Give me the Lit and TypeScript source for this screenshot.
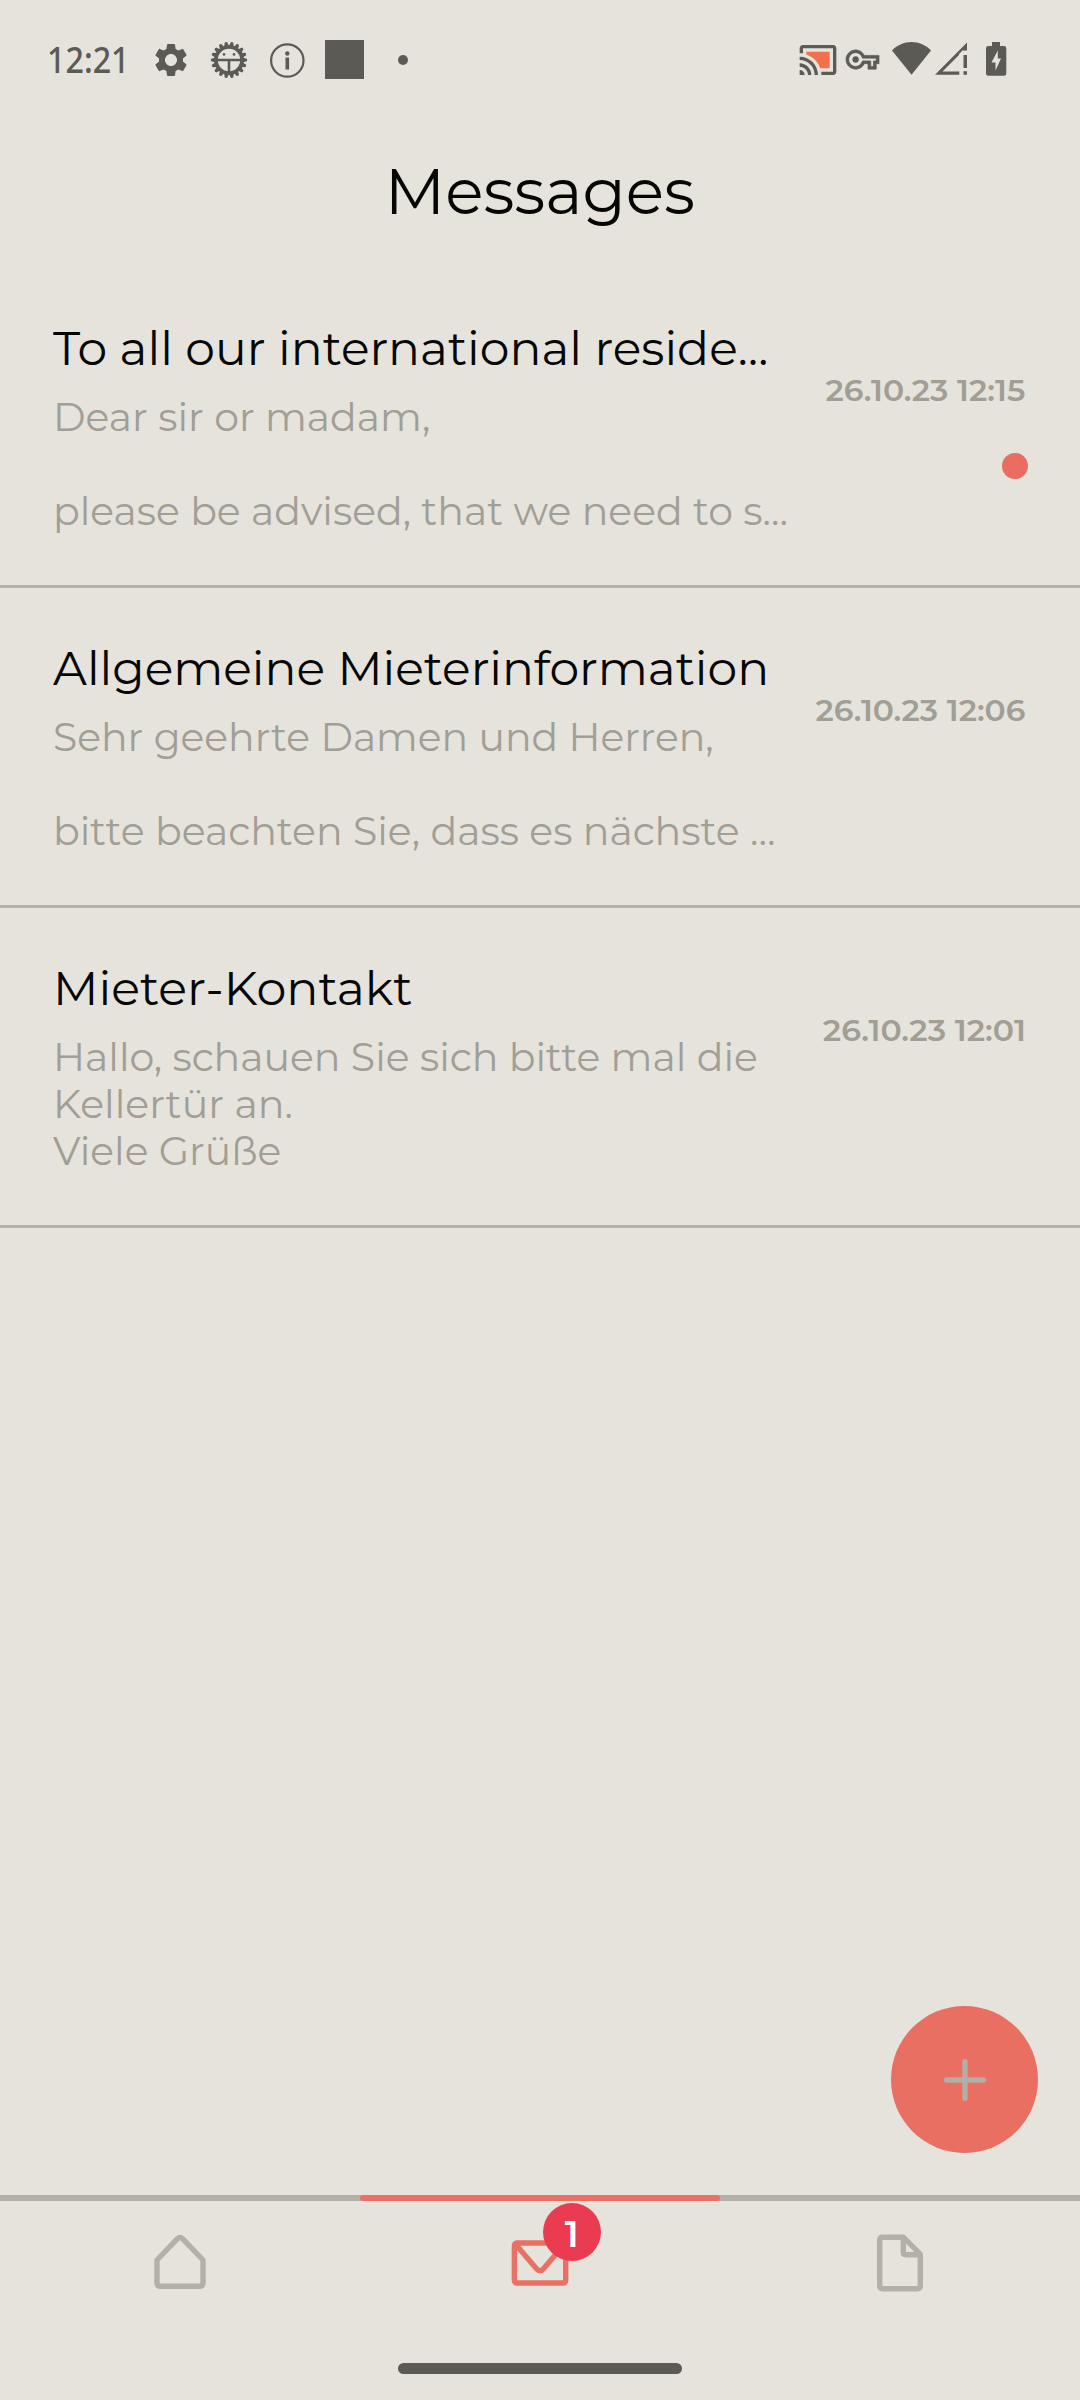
import { LitElement, html, css, svg, nothing } from "lit";
import { customElement, property, state } from "lit/decorators.js";

/** A single line of text whose drawn width is scaled to a given measure. */
@customElement("fit-text")
export class FitText extends LitElement {
  static styles = css`
    :host { display: block; white-space: pre; }
    .line { display: inline-block; transform-origin: var(--fit-origin, left) center; }
  `;
  @property() text = "";
  @property({ type: Number }) measure = 0;
  @state() private ratio = 1;

  firstUpdated() {
    const cs = getComputedStyle(this);
    const ctx = document.createElement("canvas").getContext("2d")!;
    ctx.font = `${cs.fontWeight} ${cs.fontSize} ${cs.fontFamily}`;
    const m = ctx.measureText(this.text);
    const drawn = m.actualBoundingBoxRight + m.actualBoundingBoxLeft;
    if (drawn > 0 && this.measure > 0) this.ratio = this.measure / drawn;
  }
  render() {
    return html`<span class="line" style="transform: scaleX(${this.ratio})">${this.text}</span>`;
  }
}

type Line = [text: string, measure: number];
interface Message {
  title: Line;
  preview: Line[];
  date: Line;
  unread: boolean;
}

const MESSAGES: Message[] = [
  {
    title: ["To all our international reside…", 713],
    preview: [["Dear sir or madam,", 372], ["", 0], ["please be advised, that we need to s…", 730]],
    date: ["26.10.23 12:15", 199],
    unread: true,
  },
  {
    title: ["Allgemeine Mieterinformation", 712.5],
    preview: [["Sehr geehrte Damen und Herren,", 658.5], ["", 0], ["bitte beachten Sie, dass es nächste …", 717.5]],
    date: ["26.10.23 12:06", 210],
    unread: false,
  },
  {
    title: ["Mieter-Kontakt", 353.5],
    preview: [["Hallo, schauen Sie sich bitte mal die", 699.5], ["Kellertür an.", 234.5], ["Viele Grüße", 227]],
    date: ["26.10.23 12:01", 200.5],
    unread: false,
  },
];

@customElement("message-row")
export class MessageRow extends LitElement {
  static styles = css`
    :host { display: block; }
    .row {
      box-sizing: border-box; height: 320px; padding: 54px 54.5px 0 52.5px;
      display: flex; justify-content: space-between;
      border-bottom: 3px solid #b4b1a8;
    }
    .title { font-size: 46.75px; line-height: 54px; font-weight: 400; color: #060604; margin-bottom: 18px; }
    .preview { font-size: 38.5px; line-height: 47px; height: 47px; font-weight: 400; color: #a19e95; }
    .meta { padding-top: 51px; display: flex; flex-direction: column; align-items: flex-end; gap: 44px; }
    .date { font-size: 30.25px; line-height: 36px; font-weight: 600; color: #a19e95; --fit-origin: right; }
    .dot { width: 26px; height: 26px; border-radius: 50%; background: #e96d60; margin-right: -2px; }
  `;
  @property({ attribute: false }) message!: Message;
  render() {
    const { title, preview, date, unread } = this.message;
    return html`<article class="row">
      <div>
        <fit-text class="title" .text=${title[0]} .measure=${title[1]}></fit-text>
        ${preview.map(([t, w]) => html`<fit-text class="preview" .text=${t} .measure=${w}></fit-text>`)}
      </div>
      <div class="meta">
        <fit-text class="date" .text=${date[0]} .measure=${date[1]}></fit-text>
        ${unread ? html`<span class="dot"></span>` : nothing}
      </div>
    </article>`;
  }
}

@customElement("status-bar")
export class StatusBar extends LitElement {
  static styles = css`
    :host { display: block; color: #5c5a55; }
    .bar { display: flex; align-items: center; justify-content: space-between; height: 119px; box-sizing: border-box; padding: 0 73.7px 0 47px; }
    .group { display: flex; align-items: center; }
    .left { gap: 18px; }
    .clock { width: 86px; font-family: "Noto Sans", "Open Sans", sans-serif; font-size: 35.5px; line-height: 42px; font-weight: 500; margin-bottom: 2px; }
    .square { width: 39px; height: 39px; background: currentColor; }
    .more { width: 10px; height: 10px; border-radius: 50%; background: currentColor; margin-left: 16px; }
    svg { display: block; fill: currentColor; flex: none; overflow: visible; }
    .key { margin-left: 8.4px; }
    .wifi { margin-left: 13px; }
    .signal { margin-left: 4px; }
    .battery { margin-left: 19px; }
    .hot { fill: #f2714c; }
    .line { fill: none; stroke: currentColor; }
  `;
  render() {
    const teeth = Array.from({ length: 18 }, (_, i) => svg`<path d="M17.400 7 18.700 2.200Q20 1.400 21.300 2.200L22.600 7z" transform="rotate(${i * 20 + 10} 20 20)"/>`);
    return html`<div class="bar">
      <div class="group left">
        <fit-text class="clock" .text=${"12:21"} .measure=${75}></fit-text>
        <svg width="40" height="40" viewBox="0 0 24 24"><path d="M19.14 12.94c.04-.3.06-.61.06-.94 0-.32-.02-.64-.07-.94l2.03-1.58a.49.49 0 0 0 .12-.61l-1.92-3.32a.488.488 0 0 0-.59-.22l-2.39.96c-.5-.38-1.03-.7-1.62-.94l-.36-2.54a.484.484 0 0 0-.48-.41h-3.84c-.24 0-.43.17-.47.41l-.36 2.54c-.59.24-1.13.57-1.62.94l-2.39-.96c-.22-.08-.47 0-.59.22L2.74 8.87c-.12.21-.08.47.12.61l2.03 1.58c-.05.3-.09.63-.09.94s.02.64.07.94l-2.03 1.58a.49.49 0 0 0-.12.61l1.92 3.32c.12.22.37.29.59.22l2.39-.96c.5.38 1.03.7 1.62.94l.36 2.54c.05.24.24.41.48.41h3.84c.24 0 .44-.17.47-.41l.36-2.54c.59-.24 1.13-.56 1.62-.94l2.39.96c.22.08.47 0 .59-.22l1.92-3.32c.12-.22.07-.47-.12-.61l-2.01-1.58zM12 15.6c-1.98 0-3.6-1.62-3.6-3.6s1.62-3.6 3.6-3.6 3.6 1.62 3.6 3.6-1.62 3.6-3.6 3.6z"/></svg>
        <svg width="40" height="40" viewBox="0 0 40 40">
          ${teeth}
          <circle class="line" cx="20" cy="20" r="13" stroke-width="3.6"/>
          <path class="line" stroke-width="2.6" d="M7 20h26M20 20v13"/>
          <circle cx="15" cy="14.4" r="1.3"/><circle cx="25" cy="14.4" r="1.3"/>
        </svg>
        <svg width="40" height="40" viewBox="0 0 40 40">
          <circle class="line" cx="20.3" cy="20.5" r="16.2" stroke-width="2.2"/>
          <circle cx="20.3" cy="13.5" r="2.2"/><path d="M18.500 17.500h3.600v12h-3.600z"/>
        </svg>
        <span class="square"></span>
        <span class="more"></span>
      </div>
      <div class="group">
        <svg width="40" height="40" viewBox="0 0 24 24">
          <path class="hot" d="M19 7H5v1.63c3.96 1.28 7.09 4.41 8.37 8.37H19z"/>
          <path d="M1 18v3h3c0-1.66-1.34-3-3-3zm0-4v2c2.76 0 5 2.24 5 5h2c0-3.87-3.13-7-7-7zm0-4v2c4.97 0 9 4.03 9 9h2c0-6.08-4.93-11-11-11zm20-7H3c-1.1 0-2 .9-2 2v3h2V5h18v14h-7v2h7c1.1 0 2-.9 2-2V5c0-1.1-.9-2-2-2z"/>
        </svg>
        <svg class="key" width="33" height="33" viewBox="0 0 24 24"><path stroke="currentColor" stroke-width=".5" d="M22 19h-6v-4h-2.68c-1.14 2.42-3.6 4-6.32 4-3.86 0-7-3.14-7-7s3.14-7 7-7c2.72 0 5.17 1.58 6.32 4H24v6h-2v4zm-4-2h2v-4h2v-2H11.94l-.23-.67C11.01 8.34 9.11 7 7 7c-2.76 0-5 2.24-5 5s2.24 5 5 5c2.11 0 4.01-1.34 4.71-3.33l.23-.67H18v4z"/><circle cx="7" cy="12" r="2.3"/></svg>
        <svg class="wifi" width="39" height="40" viewBox="0 0 39 40"><path d="M19.5 34.7 0 10.5C5.2 5 12 2 19.5 2S33.800 5 39 10.500z"/></svg>
        <svg class="signal" width="32" height="40" viewBox="0 0 32 40"><path d="M0 34.700 32 2.500V10.500H27.500L24 14V15L7.500 31.500H24.300V34.700zM28.500 15H32V28H28.500zM28.500 31.300H32V34.700H28.500z"/></svg>
        <svg class="battery" width="20.300" height="40" viewBox="0 0 20.300 40"><path fill-rule="evenodd" d="M6 2h8v4h4a2.300 2.300 0 0 1 2.300 2.300V33.500a2.300 2.300 0 0 1-2.300 2.300H2.300A2.300 2.300 0 0 1 0 33.500V8.300A2.300 2.300 0 0 1 2.300 6H6zM11.800 10.500 5.500 22.500H9.500V30.500L15 18.500H11.800z"/></svg>
      </div>
    </div>`;
  }
}

@customElement("tab-bar")
export class TabBar extends LitElement {
  static styles = css`
    :host { display: block; }
    .tabs { display: grid; grid-template-columns: repeat(3, 1fr); background: linear-gradient(#b3b0a7, #b3b0a7) 0 0 / 100% 6px no-repeat; }
    .tab { display: flex; flex-direction: column; align-items: center; color: #b3b0a7; }
    .mark { width: 100%; height: 6px; border-radius: 3px; margin-bottom: 31px; }
    .active { color: #e97063; }
    .active .mark { background: currentColor; }
    .icon { position: relative; width: 64px; height: 64px; }
    svg { display: block; fill: none; stroke: currentColor; stroke-width: 5.400; stroke-linejoin: round; stroke-linecap: round; }
    .badge {
      position: absolute; left: 34.700px; top: -29.500px; width: 58px; height: 58px; border-radius: 50%;
      background: #eb3b50; color: #fff; font-size: 37px; line-height: 61px; font-weight: 600; text-align: center;
    }
    .gesture { width: 284px; height: 11px; border-radius: 6px; background: #5c5a55; margin: 66.500px auto 0; }
  `;
  render() {
    return html`<nav class="tabs">
        <div class="tab"><span class="mark"></span><div class="icon">
          <svg width="64" height="64" viewBox="0 0 64 64"><path d="M9 28 29.500 6.700Q32 4.300 34.500 6.700L55 28V50.700Q55 54.200 51.500 54.200H12.500Q9 54.200 9 50.700z"/></svg>
        </div></div>
        <div class="tab active"><span class="mark"></span><div class="icon">
          <svg width="64" height="64" viewBox="0 0 64 64"><rect x="6.400" y="11" width="51.300" height="40" rx="2.500"/><path d="M8 12.800 28.500 36.800Q32 40.300 35.500 36.800L56 12.800"/></svg>
          <span class="badge">1</span>
        </div></div>
        <div class="tab"><span class="mark"></span><div class="icon">
          <svg width="64" height="64" viewBox="0 0 64 64"><path d="M14.500 5.300H35.500L52.300 22.200V53.700Q52.300 56.700 49.300 56.700H14.700Q11.700 56.700 11.700 53.700V8.300Q11.700 5.300 14.500 5.300zM35.300 6.300V20.200Q35.300 22.700 37.800 22.700H51"/></svg>
        </div></div>
      </nav>
      <div class="gesture"></div>`;
  }
}

@customElement("app-root")
export class AppRoot extends LitElement {
  static styles = css`
    :host {
      display: block; width: 1080px; height: 2400px; overflow: hidden;
      background: #e5e3dc; font-family: Montserrat, Inter, "Liberation Sans", sans-serif;
    }
    .screen { display: flex; flex-direction: column; height: 2400px; }
    .head { height: 149px; box-sizing: border-box; padding-top: 35px; display: flex; justify-content: center; }
    .heading { margin: 0; font-size: 64px; line-height: 74px; font-weight: 400; color: #060604; --fit-origin: center; }
    .list { flex: 1; }
    .actions { display: flex; justify-content: flex-end; padding: 0 42px 42px 0; }
    .fab { width: 147px; height: 147px; border-radius: 50%; background: #e86f61; display: flex; align-items: center; justify-content: center; border: 0; padding: 0; }
    .plus { display: block; stroke: #b3aea6; stroke-width: 5.300; stroke-linecap: round; }
    .foot { height: 205px; }
  `;
  render() {
    return html`<main class="screen">
      <status-bar></status-bar>
      <header class="head"><fit-text class="heading" role="heading" .text=${"Messages"} .measure=${302}></fit-text></header>
      <section class="list">${MESSAGES.map((m) => html`<message-row .message=${m}></message-row>`)}</section>
      <div class="actions"><button class="fab" aria-label="+"><svg class="plus" width="42" height="42" viewBox="0 0 42 42"><path d="M21 2.700V39.300M2.700 21H39.300"/></svg></button></div>
      <tab-bar class="foot"></tab-bar>
    </main>`;
  }
}
